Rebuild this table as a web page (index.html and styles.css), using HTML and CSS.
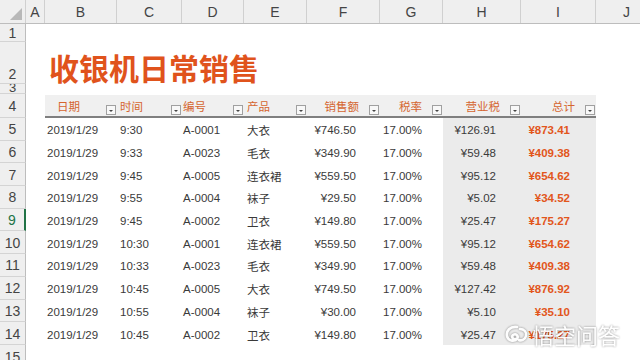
FILE: index.html
```html
<!DOCTYPE html>
<html lang="zh">
<head>
<meta charset="utf-8">
<title>收银机日常销售</title>
<link rel="stylesheet" href="styles.css">
</head>
<body>
<div class="sheet">
  <div class="row colhead">
    <div class="corner"><span class="tri"></span></div>
    <div class="ch">A</div><div class="ch">B</div><div class="ch">C</div><div class="ch">D</div><div class="ch">E</div>
    <div class="ch">F</div><div class="ch">G</div><div class="ch">H</div><div class="ch">I</div><div class="ch">J</div>
  </div>

  <div class="row r1"><div class="rh">1</div></div>
  <div class="row r2"><div class="rh">2</div><div class="spacer"></div><div class="title">收银机日常销售</div></div>
  <div class="row r3"><div class="rh">3</div></div>

  <div class="row r4">
    <div class="rh">4</div><div></div>
    <div class="th lb"><span class="tt">日期</span><span class="fb"></span></div>
    <div class="th lc"><span class="tt">时间</span><span class="fb"></span></div>
    <div class="th ld"><span class="tt">编号</span><span class="fb"></span></div>
    <div class="th le"><span class="tt">产品</span><span class="fb"></span></div>
    <div class="th rt"><span class="tt">销售额</span><span class="fb"></span></div>
    <div class="th rt"><span class="tt">税率</span><span class="fb"></span></div>
    <div class="th rt"><span class="tt">营业税</span><span class="fb"></span></div>
    <div class="th rt"><span class="tt">总计</span><span class="fb"></span></div>
  </div>

  <div class="row dr"><div class="rh">5</div><div></div><div class="c b">2019/1/29</div><div class="c cc">9:30</div><div class="c d">A-0001</div><div class="c e">大衣</div><div class="c f">¥746.50</div><div class="c g">17.00%</div><div class="c h">¥126.91</div><div class="c i">¥873.41</div></div>
  <div class="row dr"><div class="rh">6</div><div></div><div class="c b">2019/1/29</div><div class="c cc">9:33</div><div class="c d">A-0023</div><div class="c e">毛衣</div><div class="c f">¥349.90</div><div class="c g">17.00%</div><div class="c h">¥59.48</div><div class="c i">¥409.38</div></div>
  <div class="row dr"><div class="rh">7</div><div></div><div class="c b">2019/1/29</div><div class="c cc">9:45</div><div class="c d">A-0005</div><div class="c e">连衣裙</div><div class="c f">¥559.50</div><div class="c g">17.00%</div><div class="c h">¥95.12</div><div class="c i">¥654.62</div></div>
  <div class="row dr"><div class="rh">8</div><div></div><div class="c b">2019/1/29</div><div class="c cc">9:55</div><div class="c d">A-0004</div><div class="c e">袜子</div><div class="c f">¥29.50</div><div class="c g">17.00%</div><div class="c h">¥5.02</div><div class="c i">¥34.52</div></div>
  <div class="row dr"><div class="rh sel">9</div><div></div><div class="c b">2019/1/29</div><div class="c cc">9:45</div><div class="c d">A-0002</div><div class="c e">卫衣</div><div class="c f">¥149.80</div><div class="c g">17.00%</div><div class="c h">¥25.47</div><div class="c i">¥175.27</div></div>
  <div class="row dr"><div class="rh">10</div><div></div><div class="c b">2019/1/29</div><div class="c cc">10:30</div><div class="c d">A-0001</div><div class="c e">连衣裙</div><div class="c f">¥559.50</div><div class="c g">17.00%</div><div class="c h">¥95.12</div><div class="c i">¥654.62</div></div>
  <div class="row dr"><div class="rh">11</div><div></div><div class="c b">2019/1/29</div><div class="c cc">10:33</div><div class="c d">A-0023</div><div class="c e">毛衣</div><div class="c f">¥349.90</div><div class="c g">17.00%</div><div class="c h">¥59.48</div><div class="c i">¥409.38</div></div>
  <div class="row dr"><div class="rh">12</div><div></div><div class="c b">2019/1/29</div><div class="c cc">10:45</div><div class="c d">A-0005</div><div class="c e">大衣</div><div class="c f">¥749.50</div><div class="c g">17.00%</div><div class="c h">¥127.42</div><div class="c i">¥876.92</div></div>
  <div class="row dr"><div class="rh">13</div><div></div><div class="c b">2019/1/29</div><div class="c cc">10:55</div><div class="c d">A-0004</div><div class="c e">袜子</div><div class="c f">¥30.00</div><div class="c g">17.00%</div><div class="c h">¥5.10</div><div class="c i">¥35.10</div></div>
  <div class="row dr"><div class="rh">14</div><div></div><div class="c b">2019/1/29</div><div class="c cc">10:45</div><div class="c d">A-0002</div><div class="c e">卫衣</div><div class="c f">¥149.80</div><div class="c g">17.00%</div><div class="c h">¥25.47</div><div class="c i">¥175.27</div></div>
  <div class="row r15"><div class="rh">15</div></div>

  <div class="watermark">
    <svg class="wm-logo" width="26" height="22" viewBox="0 0 26 22">
      <path d="M13 4 C6 3 2 8 3 13 C4 18 10 19 13 16 C15 13 12 10 9 12 C7 14 9 17 12 16" fill="none" stroke="#fff" stroke-width="2.6" stroke-linecap="round"/>
      <path d="M16 6 C20 6 23 9 22 13 C21 17 17 18 15 17" fill="none" stroke="#fff" stroke-width="2.6" stroke-linecap="round"/>
    </svg>
    <span class="wm-text">悟空问答</span>
  </div>
</div>
</body>
</html>
```

FILE: styles.css
```css
html, body {
  margin: 0;
  padding: 0;
  background: #fff;
}
body {
  width: 640px;
  height: 360px;
  overflow: hidden;
  font-family: "Liberation Sans", "Noto Sans CJK SC", sans-serif;
  color: #3a3a3a;
}
.sheet {
  position: relative;
  width: 660px;
}
.row {
  display: grid;
  grid-template-columns: 26px 19px 72px 65px 62px 63px 73px 63px 78px 75px 62px;
}
.colhead {
  height: 24px;
  background: #efefef;
  border-bottom: 1px solid #bdbdbd;
  box-sizing: border-box;
}
.corner {
  position: relative;
  border-right: 1px solid #d0d0d0;
}
.tri {
  position: absolute;
  right: 3px;
  bottom: 3px;
  width: 0;
  height: 0;
  border-left: 12px solid transparent;
  border-bottom: 12px solid #b8b8b8;
}
.ch {
  display: flex;
  align-items: center;
  justify-content: center;
  font-size: 14px;
  color: #444;
  border-right: 1px solid #d0d0d0;
  padding-top: 1px;
}
.rh {
  display: flex;
  align-items: flex-end;
  justify-content: center;
  background: #efefef;
  border-right: 1px solid #bdbdbd;
  border-bottom: 1px solid #d4d4d4;
  box-sizing: border-box;
  font-size: 14px;
  color: #444;
  padding-bottom: 1px;
  overflow: hidden;
}
.rh.sel {
  color: #217346;
  border-right: 2px solid #217346;
}
.r1 { height: 18px; }
.r2 { height: 42px; }
.r3 { height: 10px; }
.r3 .rh { font-size: 13px; line-height: 8px; align-items: flex-start; }
.r4 { height: 24px; }
.dr { height: 22.7px; }
.r15 { height: 22px; }
.r1 .rh, .r4 .rh, .dr .rh { align-items: center; padding-bottom: 0; padding-top: 1px; }
.r15 .rh { align-items: flex-start; padding-top: 4px; }

.title {
  grid-column: 3 / 10;
  align-self: end;
  font-family: "Noto Sans CJK SC", sans-serif;
  font-weight: 700;
  font-size: 30px;
  line-height: 34px;
  color: #e0531c;
  padding-left: 4px;
  margin-bottom: 0;
  white-space: nowrap;
}

.th {
  display: flex;
  align-items: center;
  background: #f0f0f0;
  border-bottom: 2px solid #7f7f7f;
  margin-top: 1px;
  font-family: "Noto Sans CJK SC", sans-serif;
  font-size: 11.5px;
  color: #d5652f;
  position: relative;
}
.th .tt { white-space: nowrap; }
.lb { padding-left: 12px; }
.lc { padding-left: 3px; }
.ld { padding-left: 1px; }
.le { padding-left: 3px; }
.th.lb .fb, .th.lc .fb, .th.ld .fb, .th.le .fb { margin-left: auto; }
.th.rt .tt { margin-left: auto; margin-right: 10px; }
.fb {
  align-self: flex-end;
  width: 10px;
  height: 10px;
  margin-right: 1px;
  margin-bottom: 1px;
  box-sizing: border-box;
  border: 1px solid #a0a0a0;
  background: #f8f8f8;
  position: relative;
  flex: none;
}
.fb::after {
  content: "";
  position: absolute;
  left: 2px;
  top: 4px;
  border-left: 2px solid transparent;
  border-right: 2px solid transparent;
  border-top: 2px solid #444;
}

.c {
  display: flex;
  align-items: center;
  font-size: 11.5px;
  white-space: nowrap;
  padding-top: 2px;
  font-family: "Liberation Sans", "Noto Sans CJK SC", sans-serif;
}
.b { padding-left: 2px; }
.cc { padding-left: 3px; }
.d { padding-left: 1px; }
.e { padding-left: 3px; font-family: "Noto Sans CJK SC", sans-serif; }
.f { justify-content: flex-end; padding-right: 24px; }
.g { justify-content: flex-end; padding-right: 21px; }
.h { justify-content: flex-end; padding-right: 25px; background: #ebebeb; }
.i { justify-content: flex-end; padding-right: 26px; background: #ebebeb; font-weight: 700; color: #e2561c; }

.watermark {
  position: absolute;
  left: 504px;
  top: 322px;
  display: flex;
  align-items: center;
  gap: 2px;
  opacity: 0.92;
  filter: drop-shadow(0 0 1px rgba(0,0,0,0.45));
}
.wm-text {
  font-family: "Noto Sans CJK SC", sans-serif;
  font-size: 22px;
  line-height: 24px;
  color: #fff;
  letter-spacing: 0px;
}
```
